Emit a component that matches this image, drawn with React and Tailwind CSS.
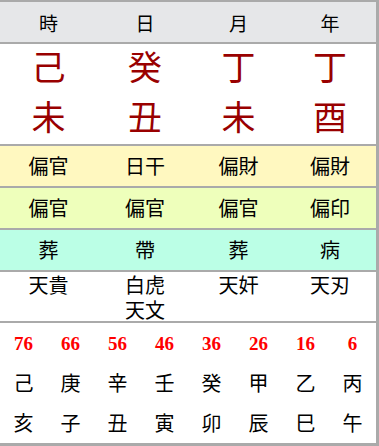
const cols = "grid grid-cols-[97px_96px_91px_92px]";

const pillars = [
  { label: "時", stem: "己", branch: "未", god: "偏官", hidden: "偏官", stage: "葬", stars: ["天貴"] },
  { label: "日", stem: "癸", branch: "丑", god: "日干", hidden: "偏官", stage: "帶", stars: ["白虎", "天文"] },
  { label: "月", stem: "丁", branch: "未", god: "偏財", hidden: "偏官", stage: "葬", stars: ["天奸"] },
  { label: "年", stem: "丁", branch: "酉", god: "偏財", hidden: "偏印", stage: "病", stars: ["天刃"] },
];

const luck = [
  { age: 76, stem: "己", branch: "亥" },
  { age: 66, stem: "庚", branch: "子" },
  { age: 56, stem: "辛", branch: "丑" },
  { age: 46, stem: "壬", branch: "寅" },
  { age: 36, stem: "癸", branch: "卯" },
  { age: 26, stem: "甲", branch: "辰" },
  { age: 16, stem: "乙", branch: "巳" },
  { age: 6, stem: "丙", branch: "午" },
];

function Row({ field, className }) {
  return (
    <div className={`${cols} h-[42px] items-center border-b-2 border-[#aaaaaa] text-[20px] text-black ${className}`}>
      {pillars.map((p, i) => (
        <div key={i} className="text-center leading-none">
          {p[field]}
        </div>
      ))}
    </div>
  );
}

export default function App() {
  return (
    <div className="w-[379px] h-[446px] bg-white font-['Noto_Sans_CJK_JP',sans-serif]">
      <div className="w-[379px] border-t-2 border-r-[3px] border-b-[3px] border-[#aaaaaa]">
        {/* header */}
        <Row field="label" className="bg-[#e6e7e9] !text-[19px]" />

        {/* stems & branches */}
        <div className="border-b-2 border-[#aaaaaa] text-[#990000] text-[34px]">
          <div className={`${cols} h-[50px] items-center`}>
            {pillars.map((p, i) => (
              <div key={i} className="text-center leading-none -mt-[6px]">{p.stem}</div>
            ))}
          </div>
          <div className={`${cols} h-[50px] items-center`}>
            {pillars.map((p, i) => (
              <div key={i} className="text-center leading-none -mt-[6px]">{p.branch}</div>
            ))}
          </div>
        </div>

        <Row field="god" className="bg-[#fff8c0]" />
        <Row field="hidden" className="bg-[#eeffbb]" />
        <Row field="stage" className="bg-[#bbffe6]" />

        {/* stars */}
        <div className={`${cols} h-[51px] border-b-2 border-[#aaaaaa] text-[20px] leading-[25px]`}>
          {pillars.map((p, i) => (
            <div key={i} className="flex flex-col items-center">
              {p.stars.map((s) => (
                <span key={s}>{s}</span>
              ))}
            </div>
          ))}
        </div>

        {/* luck pillars */}
        <div className="grid grid-cols-8 grid-rows-[40px_40px_40px] items-center text-center">
          {luck.map((l) => (
            <div key={"a" + l.age} className="font-['Liberation_Serif',serif] font-bold text-[19px] text-[#ff0000] leading-none">
              {l.age}
            </div>
          ))}
          {luck.map((l) => (
            <div key={"s" + l.age} className="text-[20px] text-black leading-none">
              {l.stem}
            </div>
          ))}
          {luck.map((l) => (
            <div key={"b" + l.age} className="text-[20px] text-black leading-none">
              {l.branch}
            </div>
          ))}
        </div>
      </div>
    </div>
  );
}
